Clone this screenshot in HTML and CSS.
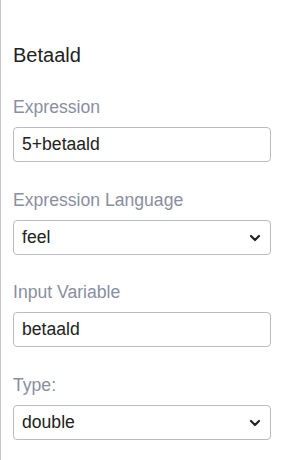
FILE: index.html
```html
<!DOCTYPE html>
<html lang="nl">
<head>
  <meta charset="UTF-8" />
  <meta name="viewport" content="width=device-width, initial-scale=1.0"/>
  <title>Betaald</title>
  <link rel="stylesheet" href="styles.css">
</head>
<body>
  <div class="panel">
    <h2 class="titel">Betaald</h2>
    <div class="veld">
      <label for="expressie">Expression</label>
      <input id="expressie" type="text" value="5+betaald" />
    </div>
    <div class="veld">
      <label for="taal">Expression Language</label>
      <div class="keuze">
        <select id="taal">
          <option>feel</option>
          <option>javascript</option>
        </select>
        <svg class="pijl" width="12" height="8" viewBox="0 0 12 8"><path d="M2 2l4 4 4-4" fill="none" stroke="#222" stroke-width="2.2" stroke-linecap="round" stroke-linejoin="round"/></svg>
      </div>
    </div>
    <div class="veld">
      <label for="variabele">Input Variable</label>
      <input id="variabele" type="text" value="betaald" />
    </div>
    <div class="veld">
      <label for="type">Type:</label>
      <div class="keuze">
        <select id="type">
          <option>double</option>
          <option>string</option>
          <option>integer</option>
        </select>
        <svg class="pijl" width="12" height="8" viewBox="0 0 12 8"><path d="M2 2l4 4 4-4" fill="none" stroke="#222" stroke-width="2.2" stroke-linecap="round" stroke-linejoin="round"/></svg>
      </div>
    </div>
  </div>
</body>
</html>
```

FILE: styles.css
```css
body {
  font-family: "Liberation Sans", Arial, sans-serif;
  background: #fff;
  margin: 0;
  padding: 0;
}
.panel {
  min-height: 100vh;
  box-sizing: border-box;
  border-left: 1px solid #c4c7d0;
  padding: 44px 12px 0 12px;
}
.titel {
  font-size: 20px;
  line-height: 23px;
  font-weight: normal;
  color: #222;
  margin: 0 0 30px 0;
}
.veld {
  margin-bottom: 27.6px;
}
.veld label {
  display: block;
  font-size: 17.6px;
  line-height: 20px;
  color: #8a8ea0;
  margin-bottom: 10px;
}
.veld input, .veld select {
  display: block;
  width: 100%;
  height: 35px;
  box-sizing: border-box;
  border: 1px solid #b9bbc6;
  border-radius: 4px;
  padding: 0 8px;
  font-family: "Liberation Sans", Arial, sans-serif;
  font-size: 17.6px;
  color: #222;
  background: #fff;
  outline: none;
}
.veld select {
  appearance: none;
  -webkit-appearance: none;
}
.keuze {
  position: relative;
}
.pijl {
  position: absolute;
  right: 10px;
  top: 14px;
  pointer-events: none;
}
```
